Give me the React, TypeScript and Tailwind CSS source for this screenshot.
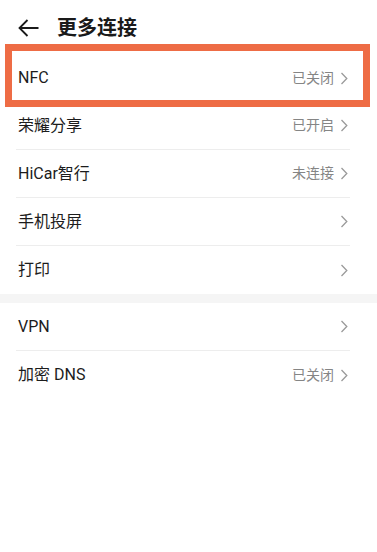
import { ReactNode } from "react";

interface RowProps {
  label: string;
  status?: string;
  divider?: boolean;
  children?: ReactNode;
}

function Chevron() {
  return (
    <svg width="8" height="13" viewBox="0 0 8 13" fill="none" className="ml-1.5">
      <path d="M1.5 1L6.8 6.5L1.5 12" stroke="#9a9a9a" strokeWidth="1.3" />
    </svg>
  );
}

function Row({ label, status, divider = true, children }: RowProps) {
  return (
    <div className="relative">
      <div
        className={`mx-4 mr-[27px] h-12 flex items-center justify-between pl-0.5 pr-[2px] ${
          divider ? "border-b border-[#ededed]" : ""
        }`}
      >
        <span className="text-[16px] text-[#1c1c1c]">{label}</span>
        <div className="flex items-center">
          {status && <span className="text-[14px] text-[#858585]">{status}</span>}
          <Chevron />
        </div>
      </div>
      {children}
    </div>
  );
}

export default function App() {
  return (
    <div
      className="w-[377px] h-[552px] bg-white overflow-hidden"
      style={{ fontFamily: 'Roboto, "Noto Sans CJK SC", sans-serif' }}
    >
      <div className="h-[54px] flex items-center pl-[18px] pt-px">
        <svg width="21" height="18" viewBox="0 0 21 18" fill="none">
          <path d="M9.5 1L1.5 9L9.5 17M1.5 9H20.5" stroke="#1a1a1a" strokeWidth="1.8" strokeLinejoin="miter" />
        </svg>
        <h1 className="ml-[18px] text-[20px] font-bold text-[#1a1a1a] leading-none">更多连接</h1>
      </div>

      <Row label="NFC" status="已关闭" divider={false}>
        <div className="absolute left-[5px] right-[7px] top-[-10px] bottom-[-5px] border-[7px] border-[#ee6c45] pointer-events-none" />
      </Row>
      <Row label="荣耀分享" status="已开启" />
      <Row label="HiCar智行" status="未连接" />
      <Row label="手机投屏" />
      <Row label="打印" divider={false} />

      <div className="h-[9px] bg-[#f5f5f5]" />

      <Row label="VPN" />
      <Row label="加密 DNS" status="已关闭" divider={false} />
    </div>
  );
}
